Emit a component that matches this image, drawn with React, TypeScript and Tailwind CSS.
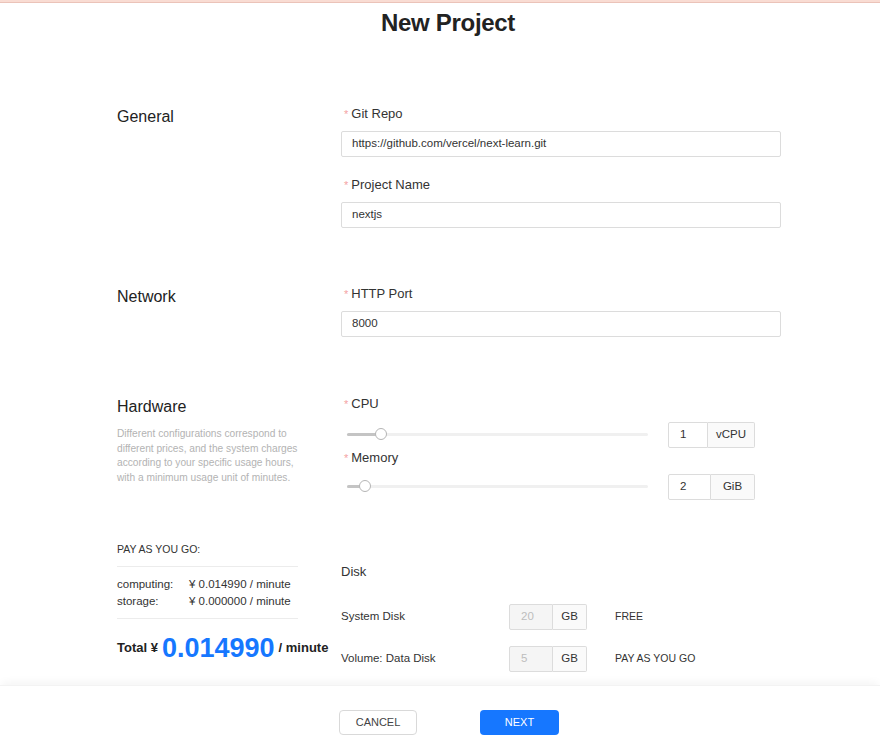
import React from "react";

const font = { fontFamily: '"Liberation Sans", Arial, sans-serif' };

function Label({ text }: { text: string }) {
  return (
    <div className="h-[20px] flex items-center text-[13px] text-[#333]">
      <span className="text-[#f4a3a3] text-[11px] mr-[3px] ml-[3px]">*</span>
      {text}
    </div>
  );
}

function TextInput({ value }: { value: string }) {
  return (
    <div className="h-[26px] w-[440px] border border-[#dcdcdc] rounded-[2px] flex items-center pl-[10px] text-[11.5px] text-[#333] bg-white">
      {value}
    </div>
  );
}

function Slider({ pos }: { pos: number }) {
  return (
    <div className="relative w-[301px] h-[25px] ml-[6px]">
      <div className="absolute left-0 right-0 top-[10px] h-[3px] rounded-full bg-[#f0f0f0]" />
      <div
        className="absolute left-0 top-[10px] h-[3px] rounded-full bg-[#c4c4c4]"
        style={{ width: pos }}
      />
      <div
        className="absolute top-[5px] w-[12px] h-[12px] rounded-full bg-white border border-[#b5b5b5]"
        style={{ left: pos - 6 }}
      />
    </div>
  );
}

function Group({
  value,
  unit,
  w1,
  w2,
  disabled,
}: {
  value: string;
  unit: string;
  w1: number;
  w2: number;
  disabled?: boolean;
}) {
  return (
    <div className="flex h-[26px] text-[11.5px]">
      <div
        className={
          "h-full flex items-center pl-[11px] border border-[#dcdcdc] rounded-l-[2px] " +
          (disabled ? "bg-[#f5f5f5] text-[#bdbdbd]" : "bg-white text-[#333]")
        }
        style={{ width: w1 }}
      >
        {value}
      </div>
      <div
        className="h-full flex items-center justify-center border border-l-0 border-[#dcdcdc] rounded-r-[2px] bg-[#fafafa] text-[#333]"
        style={{ width: w2 }}
      >
        {unit}
      </div>
    </div>
  );
}

export default function App() {
  return (
    <div className="w-[880px] h-[751px] bg-white overflow-hidden" style={font}>
      <div className="h-[3px] bg-[#f9dcd3] border-b border-[#ebc3b9]" />
      <div className="h-[40px] pl-[16px] flex items-center justify-center text-[24px] font-bold tracking-[-0.3px] text-[#222]">
        New Project
      </div>

      <div className="pl-[117px] mt-[61px]">
        {/* General */}
        <div className="flex">
          <div className="w-[224px] pt-[3px] text-[16px] leading-[20px] text-[#222]">General</div>
          <div className="w-[440px]">
            <Label text="Git Repo" />
            <div className="mt-[7px]">
              <TextInput value="https://github.com/vercel/next-learn.git" />
            </div>
            <div className="mt-[18px]">
              <Label text="Project Name" />
            </div>
            <div className="mt-[7px]">
              <TextInput value="nextjs" />
            </div>
          </div>
        </div>

        {/* Network */}
        <div className="flex mt-[56px]">
          <div className="w-[224px] pt-[3px] text-[16px] leading-[20px] text-[#222]">Network</div>
          <div className="w-[440px]">
            <Label text="HTTP Port" />
            <div className="mt-[7px]">
              <TextInput value="8000" />
            </div>
          </div>
        </div>

        {/* Hardware */}
        <div className="flex mt-[57px]">
          <div className="w-[224px]">
            <div className="pt-[3px] text-[16px] leading-[20px] text-[#222]">Hardware</div>
            <div className="mt-[10px] w-[185px] text-[10.2px] leading-[14.5px] text-[#b3b3b3]">
              Different configurations correspond to different prices, and the system charges
              according to your specific usage hours, with a minimum usage unit of minutes.
            </div>
          </div>
          <div className="w-[440px]">
            <Label text="CPU" />
            <div className="mt-[8px] flex items-center">
              <Slider pos={34} />
              <div className="ml-[20px]">
                <Group value="1" unit="vCPU" w1={40} w2={47} />
              </div>
            </div>
            <Label text="Memory" />
            <div className="mt-[6px] flex items-center">
              <Slider pos={18} />
              <div className="ml-[20px]">
                <Group value="2" unit="GiB" w1={43} w2={44} />
              </div>
            </div>
          </div>
        </div>

        {/* Pricing + Disk */}
        <div className="flex mt-[40px]">
          <div className="w-[224px]">
            <div className="w-[181px]">
              <div className="h-[20px] flex items-center text-[10.5px] text-[#333]">PAY AS YOU GO:</div>
              <div className="mt-[6px] border-t border-[#ececec]" />
              <div className="mt-[9px] text-[11.5px] leading-[17px] text-[#333]">
                <div className="flex">
                  <span className="w-[72px]">computing:</span>
                  <span>¥ 0.014990 / minute</span>
                </div>
                <div className="flex">
                  <span className="w-[72px]">storage:</span>
                  <span>¥ 0.000000 / minute</span>
                </div>
              </div>
              <div className="mt-[8px] border-t border-[#ececec]" />
            </div>
            <div className="mt-[12px] h-[34px] flex items-center whitespace-nowrap text-[#222]">
              <span className="text-[13px] font-bold">Total ¥</span>
              <span className="ml-[4px] text-[27px] font-bold text-[#1677ff]">0.014990</span>
              <span className="ml-[4px] text-[13px] font-bold">/ minute</span>
            </div>
          </div>
          <div className="w-[440px]">
            <div className="pt-[22px] h-[42px] flex items-center text-[13px] text-[#333]">Disk</div>
            <div className="mt-[22px] flex items-center">
              <div className="w-[168px] text-[11.5px] text-[#333]">System Disk</div>
              <Group value="20" unit="GB" w1={44} w2={34} disabled />
              <div className="ml-[28px] text-[10.5px] text-[#333]">FREE</div>
            </div>
            <div className="mt-[16px] flex items-center">
              <div className="w-[168px] text-[11.5px] text-[#333]">Volume: Data Disk</div>
              <Group value="5" unit="GB" w1={44} w2={34} disabled />
              <div className="ml-[28px] text-[10.5px] text-[#333]">PAY AS YOU GO</div>
            </div>
          </div>
        </div>
      </div>

      <div className="mt-[13px] h-[80px] bg-white shadow-[0_-5px_8px_-2px_rgba(0,0,0,0.045)] border-t border-[#f3f3f3]">
        <div className="pt-[24px] pl-[339px] flex">
          <button className="w-[78px] h-[25px] border border-[#d9d9d9] rounded-[4px] bg-white text-[11px] text-[#444]">
            CANCEL
          </button>
          <button className="ml-[63px] w-[79px] h-[25px] rounded-[4px] bg-[#1677ff] text-[11px] text-white">
            NEXT
          </button>
        </div>
      </div>
    </div>
  );
}
